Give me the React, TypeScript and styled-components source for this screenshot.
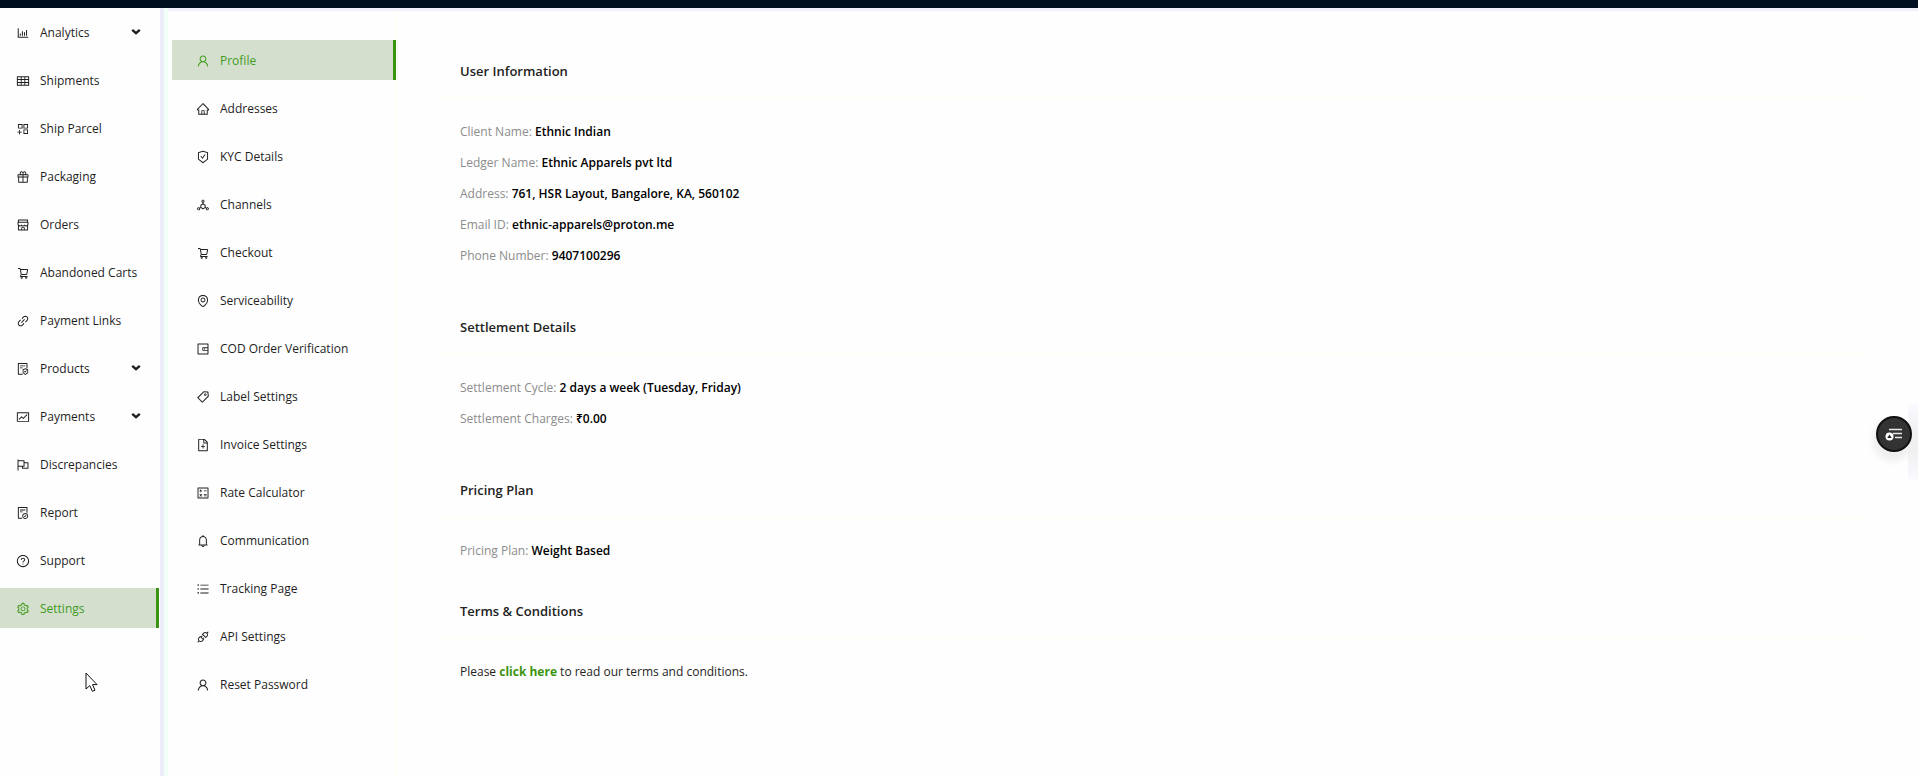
import React from 'react';
import styled, { createGlobalStyle } from 'styled-components';
import {
  AiOutlineApi, AiOutlineAppstoreAdd, AiOutlineBarChart, AiOutlineBell, AiOutlineCalculator,
  AiOutlineDeploymentUnit, AiOutlineEnvironment, AiOutlineFileAdd, AiOutlineFileDone, AiOutlineFileProtect,
  AiOutlineFlag, AiOutlineFund, AiOutlineGift, AiOutlineHome, AiOutlineLink, AiOutlineQuestionCircle,
  AiOutlineSafetyCertificate, AiOutlineSetting, AiOutlineShop, AiOutlineTable, AiOutlineTag,
  AiOutlineUnorderedList, AiOutlineUser, AiOutlineWallet,
} from 'react-icons/ai';

const GlobalStyle = createGlobalStyle`
  *, *::before, *::after { box-sizing: border-box; }
  body {
    margin: 0;
    background: #fefefe;
    color: #1f1f1f;
    font-family: "Open Sans", "Noto Sans", sans-serif;
    font-size: 12px;
    line-height: 20px;
  }
`;

const Page = styled.div`
  display: flex;
  flex-direction: column;
  min-height: 100vh;
`;

const TopBar = styled.header`
  height: 8px;
  background: #000f1f;
`;

const Body = styled.div`
  display: flex;
  flex: 1;
`;

const Sidebar = styled.nav`
  width: 160px;
  flex: none;
  padding: 4px 1px 0 0;
`;

const Divider = styled.div`
  width: 8px;
  flex: none;
  border-left: 4px solid #ecedf8;
  background: #f0fff8;
`;

const Content = styled.div`
  display: flex;
  flex: 1;
  border-top: 3px solid #eff0fa;
`;

const SubMenu = styled.nav`
  width: 229px;
  flex: none;
  padding: 29px 0 24px 4px;
  border-right: 1px solid #fdfef2;
`;

const MenuList = styled.ul`
  display: flex;
  flex-direction: column;
  gap: 8px;
  margin: 0;
  padding: 0;
  list-style: none;
`;

const MenuLink = styled.a<{ $active?: boolean; $indent: number }>`
  display: flex;
  align-items: center;
  gap: 10px;
  height: 40px;
  padding: 2px 15px 0 ${(p) => p.$indent}px;
  border-right: 3px solid ${(p) => (p.$active ? '#3a9410' : 'transparent')};
  background: ${(p) => (p.$active ? '#d5dfce' : 'transparent')};
  color: ${(p) => (p.$active ? '#419c1e' : '#1f1f1f')};
  text-decoration: none;
  white-space: nowrap;

  & > svg {
    width: 14px;
    height: 14px;
    flex: none;
  }
`;

const Chevron = styled.svg`
  && {
    width: 10px;
    height: 10px;
    margin-left: auto;
  }
`;

const Main = styled.main`
  flex: 1;
  padding: 32px 54px 24px 39px;
`;

const Card = styled.section<{ $compact?: boolean }>`
  margin-bottom: ${(p) => (p.$compact ? 17 : 28)}px;
`;

const CardTitle = styled.h2`
  margin: 0;
  padding: 18px 24px 17px;
  border-bottom: 1px solid #fdfeee;
  color: #222;
  font-size: 13px;
  font-weight: 600;
  line-height: 20px;
`;

const CardBody = styled.div`
  padding: 17px 24px 0;
`;

const Line = styled.p`
  margin: 0;
  line-height: 31px;
`;

const Label = styled.span`
  color: #8c8c8c;
`;

const Value = styled.strong`
  color: #000;
  font-weight: 600;
`;

const TermsLink = styled.a`
  color: #3a9410;
  font-weight: 700;
  text-decoration: none;
`;

const FloatingButton = styled.button`
  position: fixed;
  top: 416px;
  right: 6px;
  width: 36px;
  height: 36px;
  padding: 0;
  border: 2px solid #111;
  border-radius: 50%;
  background: #333;
  box-shadow: -1px 6px 6px 3px #efefef;
  cursor: pointer;

  svg {
    display: block;
    margin: auto;
  }
`;

const EdgeShade = styled.div`
  position: fixed;
  top: 404px;
  right: 0;
  width: 10px;
  height: 76px;
  background: linear-gradient(#fafaff, #f0f0f2 40%, #f0f0f2 60%, #fafaff);
`;

const Pointer = styled.svg`
  position: fixed;
  left: 85px;
  top: 672px;
  pointer-events: none;
`;

interface Item {
  label: string;
  icon: React.ElementType;
  active?: boolean;
  expandable?: boolean;
}

function CartIcon() {
  return (
    <svg viewBox="0 0 14 14" fill="none" stroke="currentColor" aria-hidden>
      <path d="M2 2.5h2.2l1.1 6h5.4l1-5H4.4M5 8.5l-.6 2h7.1" />
      <circle cx="5.7" cy="11.8" r=".7" />
      <circle cx="10.2" cy="11.8" r=".7" />
    </svg>
  );
}

const mainItems: Item[] = [
  { label: 'Analytics', icon: AiOutlineBarChart, expandable: true },
  { label: 'Shipments', icon: AiOutlineTable },
  { label: 'Ship Parcel', icon: AiOutlineAppstoreAdd },
  { label: 'Packaging', icon: AiOutlineGift },
  { label: 'Orders', icon: AiOutlineShop },
  { label: 'Abandoned Carts', icon: CartIcon },
  { label: 'Payment Links', icon: AiOutlineLink },
  { label: 'Products', icon: AiOutlineFileProtect, expandable: true },
  { label: 'Payments', icon: AiOutlineFund, expandable: true },
  { label: 'Discrepancies', icon: AiOutlineFlag },
  { label: 'Report', icon: AiOutlineFileDone },
  { label: 'Support', icon: AiOutlineQuestionCircle },
  { label: 'Settings', icon: AiOutlineSetting, active: true },
];

const settingsItems: Item[] = [
  { label: 'Profile', icon: AiOutlineUser, active: true },
  { label: 'Addresses', icon: AiOutlineHome },
  { label: 'KYC Details', icon: AiOutlineSafetyCertificate },
  { label: 'Channels', icon: AiOutlineDeploymentUnit },
  { label: 'Checkout', icon: CartIcon },
  { label: 'Serviceability', icon: AiOutlineEnvironment },
  { label: 'COD Order Verification', icon: AiOutlineWallet },
  { label: 'Label Settings', icon: AiOutlineTag },
  { label: 'Invoice Settings', icon: AiOutlineFileAdd },
  { label: 'Rate Calculator', icon: AiOutlineCalculator },
  { label: 'Communication', icon: AiOutlineBell },
  { label: 'Tracking Page', icon: AiOutlineUnorderedList },
  { label: 'API Settings', icon: AiOutlineApi },
  { label: 'Reset Password', icon: AiOutlineUser },
];

const cards: { title: string; compact?: boolean; rows: [string, string][] }[] = [
  {
    title: 'User Information',
    rows: [
      ['Client Name', 'Ethnic Indian'],
      ['Ledger Name', 'Ethnic Apparels pvt ltd'],
      ['Address', '761, HSR Layout, Bangalore, KA, 560102'],
      ['Email ID', 'ethnic-apparels@proton.me'],
      ['Phone Number', '9407100296'],
    ],
  },
  {
    title: 'Settlement Details',
    rows: [
      ['Settlement Cycle', '2 days a week (Tuesday, Friday)'],
      ['Settlement Charges', '₹0.00'],
    ],
  },
  { title: 'Pricing Plan', compact: true, rows: [['Pricing Plan', 'Weight Based']] },
];

function Menu({ items, indent }: { items: Item[]; indent: number }) {
  return (
    <MenuList>
      {items.map(({ label, icon: Icon, active, expandable }) => (
        <li key={label}>
          <MenuLink href="#" $active={active} $indent={indent} aria-current={active ? 'page' : undefined}>
            <Icon aria-hidden />
            {label}
            {expandable && (
              <Chevron viewBox="0 0 10 10" aria-hidden>
                <path d="M1.2 1.8 5 5.2 8.8 1.8" fill="none" stroke="#1f1f1f" strokeWidth="2.4" />
              </Chevron>
            )}
          </MenuLink>
        </li>
      ))}
    </MenuList>
  );
}

export default function App() {
  return (
    <Page>
      <GlobalStyle />
      <TopBar />
      <Body>
        <Sidebar aria-label="Main">
          <Menu items={mainItems} indent={16} />
        </Sidebar>
        <Divider />
        <Content>
          <SubMenu aria-label="Settings">
            <Menu items={settingsItems} indent={24} />
          </SubMenu>
          <Main>
            {cards.map((card) => (
              <Card key={card.title} $compact={card.compact}>
                <CardTitle>{card.title}</CardTitle>
                <CardBody>
                  {card.rows.map(([label, value]) => (
                    <Line key={label}>
                      <Label>{label}:</Label> <Value>{value}</Value>
                    </Line>
                  ))}
                </CardBody>
              </Card>
            ))}
            <Card>
              <CardTitle>Terms &amp; Conditions</CardTitle>
              <CardBody>
                <Line>
                  Please <TermsLink href="#">click here</TermsLink> to read our terms and conditions.
                </Line>
              </CardBody>
            </Card>
          </Main>
        </Content>
      </Body>
      <EdgeShade />
      <FloatingButton aria-label="Open quick menu">
        <svg width="18" height="14" viewBox="0 0 18 14" aria-hidden>
          <path d="M4 2.5h13M8 6.5h9M10 10.5h7" stroke="#e8e8e8" strokeWidth="1.6" />
          <circle cx="4.5" cy="9.5" r="4" fill="#fff" />
          <path d="M4.5 7.5 6.7 11H2.3z" fill="#222" />
        </svg>
      </FloatingButton>
      <Pointer width="14" height="21" viewBox="0 0 14 21" aria-hidden>
        <path d="M1 1v16l3.8-3.4 2.6 5.7 2.6-1.1-2.5-5.6H12z" fill="#fff" stroke="#111" />
      </Pointer>
    </Page>
  );
}
